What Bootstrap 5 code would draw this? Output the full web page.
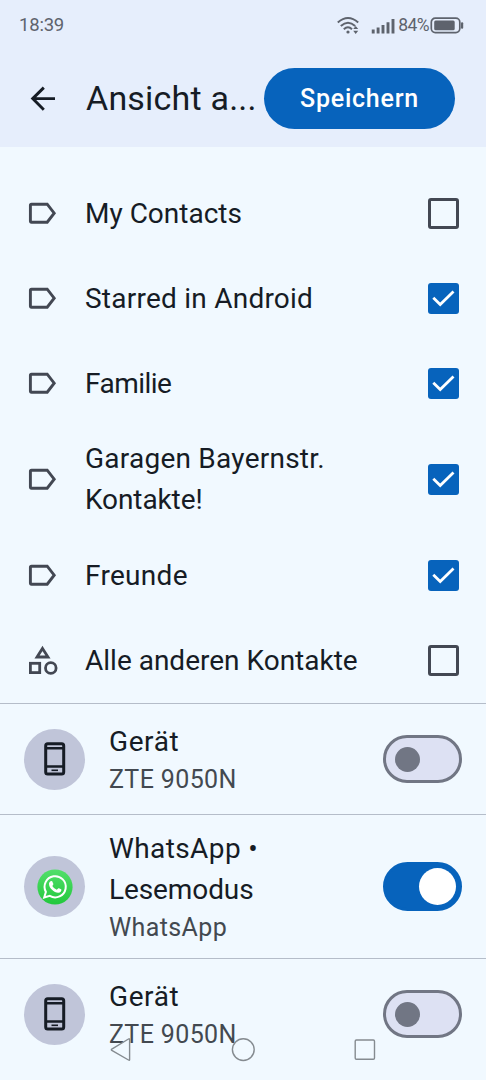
<!DOCTYPE html>
<html lang="de">
<head>
<meta charset="utf-8">
<meta name="viewport" content="width=device-width, initial-scale=1">
<title>Ansicht anpassen</title>
<link href="https://cdn.jsdelivr.net/npm/bootstrap@5.3.0/dist/css/bootstrap.min.css" rel="stylesheet">
<style>
  body { width: 486px; height: 1080px; overflow: hidden; background: #f1f9ff; color: #161c25; font-family: Roboto, "Liberation Sans", sans-serif; }
  .top-area { background: #e6eefc; height: 147px; }
  .status { height: 50px; padding: 1px 22px 0 19px; color: #5e636d; font-size: 18.5px; line-height: 1; }
  .clock { letter-spacing: -.2px; }
  .signal { margin-left: 10px; }
  .pct { margin-left: 2px; font-size: 17.5px; letter-spacing: -.6px; }
  .battery { margin-left: 1px; }
  .app-bar { height: 97px; padding: 0 31px 0 24px; }
  .title { width: 178px; margin-left: 25px; font-size: 34px; line-height: 44px; letter-spacing: .2px; padding-bottom: 2px; white-space: nowrap; }
  .btn.save { width: 191px; height: 61px; background: #0763bc; color: #fff; font-size: 25px; font-weight: 500; letter-spacing: .75px; padding: 0; }
  .labels { padding-top: 23.5px; }
  .label-row { min-height: 85px; padding: 12px 27px 12px 24px; }
  .label-row.tall { min-height: 107.5px; }
  .label-row .txt { margin-left: 24px; width: 300px; }
  .txt { font-size: 28px; line-height: 41px; }
  .sub { font-size: 25px; line-height: 35px; color: #434950; letter-spacing: .38px; }
  .sp-n5 { letter-spacing: -.55px; }
  .sp-n1 { letter-spacing: -.1px; }
  .sp-2 { letter-spacing: .24px; }
  .sp-3 { letter-spacing: .3px; }
  .sp-4 { letter-spacing: .4px; }
  .sp-6 { letter-spacing: .6px; }
  .box { width: 31px; height: 31px; border: 3px solid #434853; border-radius: 3px; }
  .box.on { border: 0; background: #0763bc; }
  .account { border-top: 1px solid #b5bdc9; padding: 0 24px; height: 111px; }
  .account.tall { height: 144px; }
  .avatar { width: 61px; height: 61px; background: #c0c5d9; }
  .account .body-col { margin-left: 24px; width: 200px; }
  .toggle { width: 79.5px; height: 48.5px; border-radius: 25px; background: #dde1f3; border: 3px solid #717684; padding: 0 9px; }
  .toggle i { width: 25px; height: 25px; border-radius: 50%; background: #717684; }
  .toggle.on { background: #0763bc; border-color: #0763bc; padding: 0 3px; justify-content: flex-end; }
  .toggle.on i { width: 37px; height: 37px; background: #fff; }
  .sysnav { position: absolute; left: 0; top: 1030px; }
</style>
</head>
<body class="position-relative">
<svg width="0" height="0" class="position-absolute">
  <symbol id="tag" viewBox="0 0 37 37"><path d="M7.5 9.2H23.2L30.2 18.2L23.2 27.2H7.5Q6.4 27.2 6.4 26.1V10.3Q6.4 9.2 7.5 9.2Z" fill="none" stroke="#434853" stroke-width="2.9"/></symbol>
  <symbol id="check" viewBox="0 0 31 31"><path d="M5.3 14.8L12.2 21.5L25.5 8.5" fill="none" stroke="#fff" stroke-width="2.8"/></symbol>
  <symbol id="phone" viewBox="0 0 22 34"><rect x="1.7" y="1.7" width="18" height="30.2" rx="2" fill="none" stroke="#161c25" stroke-width="3"/><path d="M1 6.3H20M1 24.5H20" stroke="#161c25" stroke-width="2.6"/><path d="M7.5 28.3H14" stroke="#161c25" stroke-width="1.6"/></symbol>
</svg>
<header class="top-area">
  <div class="status d-flex align-items-center">
    <span class="clock me-auto">18:39</span>
    <svg width="24" height="20" viewBox="0 0 24 20" fill="none" stroke="#5e636d" stroke-width="2"><path d="M.8 6.5Q11-2.5 21.2 6.5M3.8 10Q11 3.5 18.2 10M6.8 13.2Q11 9.4 15 13.2"/><circle cx="11" cy="16" r="1.6" fill="#5e636d" stroke="none"/><path d="M16.2 13L18.7 10L21.2 13ZM16.2 14.8L18.7 18L21.2 14.8Z" fill="#5e636d" stroke="none"/></svg>
    <svg class="signal" width="25" height="16" viewBox="0 0 25 16" stroke="#5e636d" stroke-width="2.9"><path d="M2.2 15.5V11.5M7.1 15.5V9.5M12 15.5V7M17 15.5V4.2M22 15.5V1"/></svg>
    <span class="pct">84%</span>
    <svg class="battery" width="34" height="17" viewBox="0 0 34 17"><rect x="1.3" y="1.2" width="28.5" height="14.4" rx="4" fill="none" stroke="#5e636d" stroke-width="1.7"/><rect x="4.2" y="3.6" width="20.5" height="9.6" rx="1.5" fill="#5e636d"/><rect x="31" y="5.3" width="2.2" height="6.4" rx="1" fill="#5e636d"/></svg>
  </div>
  <div class="app-bar d-flex align-items-center">
    <svg width="37" height="37" viewBox="0 0 37 37" fill="none" stroke="#161c25" stroke-width="2.9"><path d="M31 18.6H9M19.8 7.6L8.7 18.6L19.8 29.7"/></svg>
    <div class="title">Ansicht a...</div>
    <button class="btn save rounded-pill ms-auto border-0">Speichern</button>
  </div>
</header>
<main>
  <section class="labels">
    <div class="label-row d-flex align-items-center"><svg width="37" height="37"><use href="#tag"/></svg><div class="txt">My Contacts</div><div class="box ms-auto"></div></div>
    <div class="label-row d-flex align-items-center"><svg width="37" height="37"><use href="#tag"/></svg><div class="txt sp-2">Starred in Android</div><div class="box on ms-auto d-flex"><svg width="31" height="31"><use href="#check"/></svg></div></div>
    <div class="label-row d-flex align-items-center"><svg width="37" height="37"><use href="#tag"/></svg><div class="txt sp-n5">Familie</div><div class="box on ms-auto d-flex"><svg width="31" height="31"><use href="#check"/></svg></div></div>
    <div class="label-row tall d-flex align-items-center"><svg width="37" height="37"><use href="#tag"/></svg><div class="txt"><span class="sp-2">Garagen Bayernstr.</span><br><span class="sp-n1">Kontakte!</span></div><div class="box on ms-auto d-flex"><svg width="31" height="31"><use href="#check"/></svg></div></div>
    <div class="label-row d-flex align-items-center"><svg width="37" height="37"><use href="#tag"/></svg><div class="txt sp-3">Freunde</div><div class="box on ms-auto d-flex"><svg width="31" height="31"><use href="#check"/></svg></div></div>
    <div class="label-row d-flex align-items-center"><svg width="37" height="37" viewBox="0 0 37 37" fill="none" stroke="#434853" stroke-width="2.8"><path d="M18.5 6.4L24 15H13Z"/><rect x="6.4" y="21.3" width="9.3" height="9.3"/><circle cx="26.8" cy="26" r="5.3"/></svg><div class="txt">Alle anderen Kontakte</div><div class="box ms-auto"></div></div>
  </section>
  <section class="account d-flex align-items-center">
    <div class="avatar rounded-circle d-flex align-items-center justify-content-center"><svg width="22" height="34"><use href="#phone"/></svg></div>
    <div class="body-col"><div class="txt sp-6">Gerät</div><div class="sub">ZTE 9050N</div></div>
    <div class="toggle d-flex align-items-center ms-auto"><i></i></div>
  </section>
  <section class="account tall d-flex align-items-center">
    <div class="avatar rounded-circle d-flex align-items-center justify-content-center">
      <svg width="36" height="36" viewBox="0 0 36 36"><defs><linearGradient id="wa" x2="0" y2="1"><stop stop-color="#53df6b"/><stop offset="1" stop-color="#22c83c"/></linearGradient></defs><circle cx="18" cy="18" r="17.6" fill="url(#wa)"/><path d="M7.2 28.5L8.9 22.9A10.6 10.6 0 1 1 12.8 26.9Z" fill="none" stroke="#fff" stroke-width="2"/><path d="M12.5 13.2Q13.8 11.6 15.2 12.2L16.4 15.1Q16.3 16 15.3 16.9Q16.8 19.5 19.8 20.8L21.3 19.2Q22 19 24.4 20.4Q24.5 23.4 21.3 23.8C17.5 24 11.8 19 12 14.8Q12.1 13.8 12.5 13.2Z" fill="#fff"/></svg>
    </div>
    <div class="body-col"><div class="txt"><span class="sp-4">WhatsApp •</span><br><span class="sp-n1">Lesemodus</span></div><div class="sub">WhatsApp</div></div>
    <div class="toggle on d-flex align-items-center ms-auto"><i></i></div>
  </section>
  <section class="account d-flex align-items-center">
    <div class="avatar rounded-circle d-flex align-items-center justify-content-center"><svg width="22" height="34"><use href="#phone"/></svg></div>
    <div class="body-col"><div class="txt sp-6">Gerät</div><div class="sub">ZTE 9050N</div></div>
    <div class="toggle d-flex align-items-center ms-auto"><i></i></div>
  </section>
</main>
<nav class="sysnav"><svg class="d-block" width="486" height="50" viewBox="0 0 486 50" fill="none" stroke="#858b90" stroke-width="1.4" stroke-linejoin="round"><path d="M129.6 9.5V29.8Q129.6 30.6 128.5 30L111.8 20.3Q110.9 19.7 111.8 19.1L128.5 9Q129.6 8.4 129.6 9.5Z"/><circle cx="243.3" cy="19.6" r="10.9"/><rect x="355.2" y="10" width="19.3" height="19.3" rx="1.2"/></svg></nav>
<script src="https://cdn.jsdelivr.net/npm/bootstrap@5.3.0/dist/js/bootstrap.bundle.min.js"></script>
</body>
</html>
